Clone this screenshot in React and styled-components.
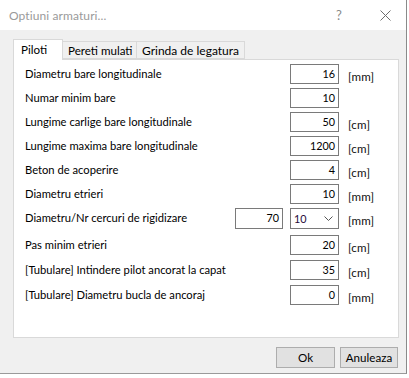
import React from 'react'
import styled, { createGlobalStyle } from 'styled-components'

const GlobalStyle = createGlobalStyle`
  html, body {
    margin: 0;
    padding: 0;
    background: #ffffff;
  }
  body {
    font-family: Lato, "Noto Sans", sans-serif;
    font-size: 12px;
    color: #000;
  }
`

const Screen = styled.div`
  width: 409px;
  height: 378px;
  background: #ffffff;
  display: flex;
  flex-direction: column;
  overflow: hidden;
`

const Dialog = styled.div`
  width: 407px;
  height: 374px;
  box-sizing: border-box;
  border-right: 1px solid #8a8a8a;
  border-bottom: 1px solid #9a9a9a;
  display: flex;
  flex-direction: column;
`

const TitleBar = styled.div`
  height: 30px;
  flex: none;
  background: #ffffff;
  display: flex;
  align-items: center;
  padding-left: 9px;
`

const Title = styled.div`
  flex: 1;
  color: #9a9a9a;
  font-size: 12px;
  letter-spacing: 0.1px;
`

const TitleButton = styled.div`
  width: ${p => p.$w}px;
  color: #8a8a8a;
  font-size: 13px;
  display: flex;
  justify-content: center;
  align-items: center;
`

const Body = styled.div`
  flex: 1;
  background: #f0f0f0;
  padding: 9px 8px 0 13px;
  display: flex;
  flex-direction: column;
`

const TabStrip = styled.div`
  display: flex;
  align-items: flex-end;
  height: 20px;
  position: relative;
  z-index: 1;
`

const Tab = styled.div`
  box-sizing: border-box;
  height: ${p => (p.$active ? 21 : 18)}px;
  margin-bottom: ${p => (p.$active ? -1 : 0)}px;
  padding: ${p => (p.$active ? '2px 0 0 7px' : '1px 0 0 5px')};
  background: ${p => (p.$active ? '#ffffff' : '#f0f0f0')};
  border: 1px solid #d9d9d9;
  border-bottom: ${p => (p.$active ? 'none' : '1px solid #d9d9d9')};
  border-left: ${p => (p.$first || p.$active ? '1px solid #d9d9d9' : 'none')};
  width: ${p => p.$w}px;
  font-size: ${p => p.$fs || 11.6}px;
  line-height: 15px;
  white-space: nowrap;
  overflow: hidden;
`

const Panel = styled.div`
  box-sizing: border-box;
  width: 386px;
  height: 279px;
  background: #ffffff;
  border: 1px solid #d9d9d9;
  padding: 4px 0 0 11px;
  display: flex;
  flex-direction: column;
`

const Row = styled.div`
  height: ${p => p.$h}px;
  display: flex;
  align-items: flex-start;
  flex: none;
`

const Label = styled.div`
  flex: 1;
  height: 20px;
  line-height: 20px;
  font-size: 11.2px;
  white-space: nowrap;
`

const Field = styled.div`
  box-sizing: border-box;
  width: ${p => p.$w || 49}px;
  height: ${p => p.$h || 20}px;
  margin-right: ${p => p.$mr || 0}px;
  border: 1px solid #7a7a7a;
  background: #ffffff;
  text-align: right;
  padding-right: 3px;
  line-height: 18px;
  font-size: 10.8px;
`

const Combo = styled.div`
  box-sizing: border-box;
  width: 49px;
  height: 21px;
  border: 1px solid #7a7a7a;
  background: #ffffff;
  display: flex;
  align-items: center;
  justify-content: space-between;
  padding: 0 5px 0 3px;
  font-size: 10.8px;
  color: #2a0a3a;
`

const Unit = styled.div`
  width: 50px;
  margin-left: 9px;
  padding-top: 3px;
  height: 20px;
  line-height: 20px;
  font-size: 11.6px;
  letter-spacing: 0.2px;
  color: #111;
`

const Footer = styled.div`
  display: flex;
  justify-content: flex-end;
  gap: 5px;
  padding: 9px 0 0 0;
`

const Button = styled.div`
  box-sizing: border-box;
  width: ${p => p.$w}px;
  height: 21px;
  background: #e1e1e1;
  border: 1px solid #adadad;
  display: flex;
  align-items: center;
  justify-content: center;
  font-size: 11.6px;
`

const Strip = styled.div`
  height: 4px;
  flex: none;
`

const rows = [
  { label: 'Diametru bare longitudinale', value: '16', unit: '[mm]', h: 24 },
  { label: 'Numar minim bare', value: '10', unit: '', h: 24 },
  { label: 'Lungime carlige bare longitudinale', value: '50', unit: '[cm]', h: 24 },
  { label: 'Lungime maxima bare longitudinale', value: '1200', unit: '[cm]', h: 24 },
  { label: 'Beton de acoperire', value: '4', unit: '[cm]', h: 24 },
  { label: 'Diametru etrieri', value: '10', unit: '[mm]', h: 24 },
  { label: 'Diametru/Nr cercuri de rigidizare', value: '10', extra: '70', combo: true, unit: '[mm]', h: 27 },
  { label: 'Pas minim etrieri', value: '20', unit: '[cm]', h: 25 },
  { label: '[Tubulare] Intindere pilot ancorat la capat', value: '35', unit: '[cm]', h: 25 },
  { label: '[Tubulare] Diametru bucla de ancoraj', value: '0', unit: '[mm]', h: 25 },
]

const ticks = [11, 28, 84, 102, 176, 193, 267, 285, 358, 376]

const App = () => {
  return (
    <Screen>
      <GlobalStyle />
      <Dialog>
        <TitleBar>
          <Title>Optiuni armaturi...</Title>
          <TitleButton $w={50}>?</TitleButton>
          <TitleButton $w={42}>
            <svg width="11" height="11" viewBox="0 0 11 11">
              <path d="M0.5 0.5 L10.5 10.5 M10.5 0.5 L0.5 10.5" stroke="#6e6e6e" strokeWidth="1" fill="none" />
            </svg>
          </TitleButton>
        </TitleBar>
        <Body>
          <TabStrip>
            <Tab $active $first $w={50}>Piloti</Tab>
            <Tab $w={74}>Pereti mulati</Tab>
            <Tab $w={108} $fs={12}>Grinda de legatura</Tab>
          </TabStrip>
          <Panel>
            {rows.map(r => (
              <Row key={r.label} $h={r.h}>
                <Label>{r.label}</Label>
                {r.extra && <Field $w={48} $h={21} $mr={7}>{r.extra}</Field>}
                {r.combo ? (
                  <Combo>
                    <span>{r.value}</span>
                    <svg width="9" height="5" viewBox="0 0 9 5">
                      <path d="M0.5 0.5 L4.5 4.5 L8.5 0.5" stroke="#555" strokeWidth="1" fill="none" />
                    </svg>
                  </Combo>
                ) : (
                  <Field>{r.value}</Field>
                )}
                <Unit>{r.unit}</Unit>
              </Row>
            ))}
          </Panel>
          <Footer>
            <Button $w={59}>Ok</Button>
            <Button $w={58}>Anuleaza</Button>
          </Footer>
        </Body>
      </Dialog>
      <Strip>
        <svg width="409" height="4" viewBox="0 0 409 4">
          {ticks.map(x => (
            <line key={x} x1={x + 0.5} y1="0" x2={x + 0.5} y2="4" stroke="#a0a0a0" strokeWidth="1" />
          ))}
        </svg>
      </Strip>
    </Screen>
  )
}

export default App
